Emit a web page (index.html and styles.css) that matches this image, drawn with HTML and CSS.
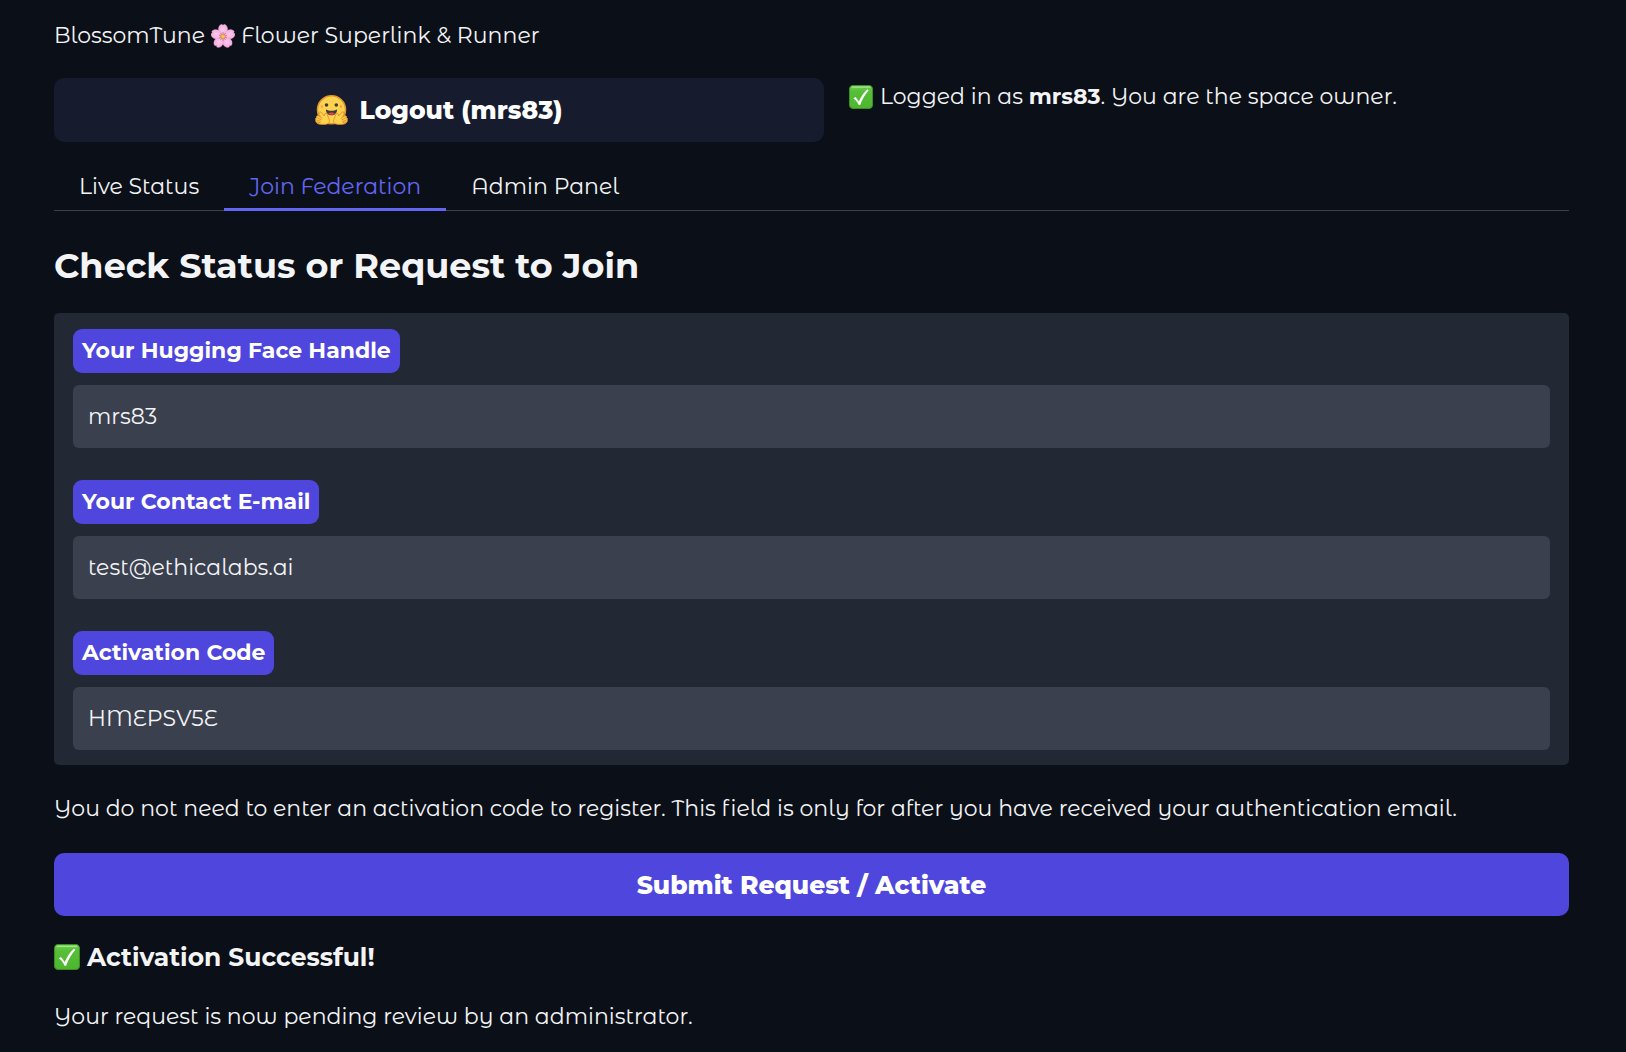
FILE: index.html
```html
<!DOCTYPE html>
<html lang="en">
<head>
<meta charset="utf-8">
<meta name="viewport" content="width=device-width, initial-scale=1">
<title>BlossomTune</title>
<link rel="stylesheet" href="styles.css">
</head>
<body>
<svg width="0" height="0" class="sprite" aria-hidden="true">
  <defs>
    <linearGradient id="green" x1="0" y1="0" x2="0" y2="1">
      <stop offset="0" stop-color="#7ad05c"/><stop offset=".25" stop-color="#56bf38"/><stop offset="1" stop-color="#4fb52f"/>
    </linearGradient>
    <radialGradient id="pink" cx=".5" cy=".45" r=".6">
      <stop offset="0" stop-color="#fbc9ea"/><stop offset="1" stop-color="#f3a6dc"/>
    </radialGradient>
    <symbol id="check" viewBox="0 0 24 24">
      <rect x=".5" y=".5" width="23" height="23" rx="3.5" fill="url(#green)" stroke="#3c8f26"/>
      <path d="M3 2.2h18" stroke="#a5e58d" stroke-width="1.2" stroke-linecap="round"/>
      <path d="M4.4 13.2 6.6 11.9 9.9 16.6C12 11.8 14.8 7.600 18.300 4.300L19.700 5.200C16 9.600 13 14.500 11.200 20H9.700C8.500 17.300 6.800 15.100 4.400 13.200Z" fill="#fff"/>
    </symbol>
    <symbol id="blossom" viewBox="0 0 24 24">
      <g fill="url(#pink)" stroke="#e9a0d2" stroke-width=".3">
        <path id="petal" d="M12 12.500C8.500 10 6.600 6.500 7.700 3.200 8.300 1.500 9.700.4 10.900.3L12 1.300 13.100.3C14.300.4 15.700 1.500 16.300 3.200 17.400 6.500 15.500 10 12 12.500Z"/>
        <use href="#petal" transform="rotate(72 12 12.500)"/>
        <use href="#petal" transform="rotate(144 12 12.500)"/>
        <use href="#petal" transform="rotate(216 12 12.500)"/>
        <use href="#petal" transform="rotate(288 12 12.500)"/>
      </g>
      <path d="M12 8v9M8 11l8 3M16 11l-8 3M9.500 16l5-7M14.500 16l-5-7" stroke="#c95f93" stroke-width=".7"/>
      <circle cx="12" cy="12.500" r="2.200" fill="#f0c94a" stroke="#c88a3a" stroke-width=".6"/>
    </symbol>
    <symbol id="hug" viewBox="0 0 33 30">
      <circle cx="16.500" cy="14.800" r="14" fill="#ffd34d" stroke="#e0952f" stroke-width="1.500"/>
      <circle cx="7" cy="11.500" r="1.200" fill="#ff9a4a"/><circle cx="26" cy="11.500" r="1.200" fill="#ff9a4a"/>
      <circle cx="11.500" cy="10" r="1.800" fill="#3a3b45"/><circle cx="21.300" cy="10" r="1.800" fill="#3a3b45"/>
      <path d="M11 14.500C14 16.300 19 16.300 22 14.500 22.300 18 19.500 20.300 16.500 20.300S10.700 18 11 14.500Z" fill="#3a3b45"/>
      <path d="M13.300 18.800C14.500 17.200 18.500 17.200 19.700 18.800 18.700 20.100 14.300 20.100 13.300 18.800Z" fill="#ee3f45"/>
      <g id="hand" fill="#ffd34d" stroke="#e0952f" stroke-width="1" stroke-linejoin="round">
        <path d="M5.300 21.500C3.500 18.500 3.700 17 4.800 16.800 6.500 16.500 8 20 9.300 21 9.500 19.500 9.500 18.300 10.800 18.300 12.500 18.400 12.500 21 13.800 23.500 15.500 27 13.500 29 10.500 29.300H6.500C3.500 29.300 1.400 28.200 1.500 27 .5 26.500.3 25.500 1 24.900.3 24 .6 22.800 1.600 22.700 1.200 21.500 2 20.500 3 20.700Z"/>
        <path d="M2 22.700 6.500 25M1.200 24.900 5.700 26.500M3.300 20.700 7.300 23.500M2 27 5.500 27.700" fill="none"/>
      </g>
      <use href="#hand" transform="translate(33 0) scale(-1 1)"/>
    </symbol>
  </defs>
</svg>

<main class="app">
  <p class="line brand"><span>BlossomTune</span><svg class="icon" role="img" aria-label="Cherry blossom"><use href="#blossom"/></svg><span>Flower Superlink &amp; Runner</span></p>

  <div class="account">
    <button class="button button-secondary" type="button"><svg class="hug" aria-hidden="true"><use href="#hug"/></svg>Logout (mrs83)</button>
    <p class="line status"><svg class="icon" role="img" aria-label="Done"><use href="#check"/></svg><span>Logged in as <strong>mrs83</strong>. You are the space owner.</span></p>
  </div>

  <div class="tabs" role="tablist">
    <button class="tab" type="button" role="tab" aria-selected="false">Live Status</button>
    <button class="tab tab-active" type="button" role="tab" aria-selected="true">Join Federation</button>
    <button class="tab" type="button" role="tab" aria-selected="false">Admin Panel</button>
  </div>

  <h2 class="title">Check Status or Request to Join</h2>

  <form class="form">
    <div class="panel">
      <div class="field">
        <label class="label" for="handle">Your Hugging Face Handle</label>
        <input class="input" id="handle" type="text" value="mrs83">
      </div>
      <div class="field">
        <label class="label" for="email">Your Contact E-mail</label>
        <input class="input" id="email" type="email" value="test@ethicalabs.ai">
      </div>
      <div class="field">
        <label class="label" for="code">Activation Code</label>
        <input class="input" id="code" type="text" value="HMEPSV5E">
      </div>
    </div>
    <p class="line">You do not need to enter an activation code to register. This field is only for after you have received your authentication email.</p>
    <button class="button button-primary" type="button">Submit Request / Activate</button>
  </form>

  <section class="result">
    <h3 class="result-title"><svg class="icon icon-large" role="img" aria-label="Done"><use href="#check"/></svg><span>Activation Successful!</span></h3>
    <p class="line">Your request is now pending review by an administrator.</p>
  </section>
</main>
</body>
</html>
```
FILE: styles.css
```css
* {
  box-sizing: border-box;
}

body {
  margin: 0;
  background: #0b0f17;
  color: #f3f4f6;
  font-family: "Montserrat Alternates", Montserrat, Inter, "Open Sans", sans-serif;
  font-size: 22px;
  font-weight: 400;
  line-height: 36px;
}

button,
input {
  font: inherit;
  color: inherit;
}

strong,
.button,
.label,
.title,
.result-title {
  font-family: Montserrat, Inter, "Open Sans", sans-serif;
  font-weight: 700;
}

.sprite {
  position: absolute;
}

.app {
  padding: 17px 57px 16px 54px;
}

.line {
  margin: 0;
  line-height: 38px;
}

.icon {
  width: 24px;
  height: 24px;
  flex: none;
}

.icon-large {
  width: 26px;
  height: 26px;
}

.brand,
.status,
.result-title {
  display: flex;
  align-items: center;
  gap: 7px;
}

.brand {
  gap: 6px;
}

.account {
  display: grid;
  grid-template-columns: 77fr 72fr;
  align-items: start;
  gap: 25px;
  margin-top: 23px;
}

.button {
  display: flex;
  align-items: center;
  justify-content: center;
  gap: 11px;
  width: 100%;
  height: 64px;
  padding: 0 24px;
  border: 0;
  border-radius: 10px;
  color: #fff;
  font-size: 25px;
  font-weight: 800;
}

.button-secondary {
  background: #161c2d;
}

.button-primary {
  height: 63px;
  background: #4f46dd;
}

.hug {
  width: 33px;
  height: 30px;
}

.tabs {
  display: flex;
  margin-top: 19px;
  box-shadow: inset 0 -1px #3b4050;
}

.tab {
  height: 50px;
  padding: 4px 25px 0;
  border: 0;
  border-bottom: 3px solid transparent;
  background: none;
}

.tab-active {
  border-color: #6366f1;
  color: #6366f1;
}

.title {
  margin: 32px 0 24px;
  font-size: 35px;
  line-height: 46px;
}

.form {
  display: flex;
  flex-direction: column;
  gap: 25px;
}

.panel {
  display: flex;
  flex-direction: column;
  gap: 32px;
  padding: 16px 19px 15px;
  border-radius: 5px;
  background: #222935;
}

.field {
  display: flex;
  flex-direction: column;
  align-items: flex-start;
  gap: 12px;
}

.label {
  padding: 4px 9px;
  border-radius: 9px;
  background: #4f46dd;
  color: #fff;
}

.input {
  width: 100%;
  height: 63px;
  padding: 0 15px;
  border: 0;
  border-radius: 6px;
  background: #3b404f;
}

.result {
  display: flex;
  flex-direction: column;
  gap: 23px;
  margin-top: 23px;
}

.result-title {
  margin: 0;
  font-size: 25px;
}
```
